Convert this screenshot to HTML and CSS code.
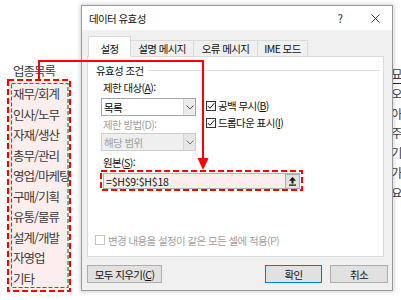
FILE: index.html
```html
<!DOCTYPE html>
<html lang="ko">
<head>
<meta charset="utf-8">
<title>데이터 유효성</title>
<link rel="stylesheet" href="styles.css">
</head>
<body>
<div class="sheet">
  <div class="col-left">
    <div class="col-head">업종목록</div>
    <ul class="list">
      <li>재무/회계</li>
      <li>인사/노무</li>
      <li>자재/생산</li>
      <li>총무/관리</li>
      <li>영업/마케팅</li>
      <li>구매/기획</li>
      <li>유통/물류</li>
      <li>설계/개발</li>
      <li>자영업</li>
      <li>기타</li>
    </ul>
  </div>
  <div class="col-right">
    <div class="frag head">묘</div>
    <div class="frag">오</div>
    <div class="frag">아</div>
    <div class="frag">주</div>
    <div class="frag">기</div>
    <div class="frag">가</div>
    <div class="frag">요</div>
  </div>
</div>

<div class="dialog">
  <div class="titlebar">
    <span class="title">데이터 유효성</span>
    <span class="help">?</span>
    <span class="close"><svg width="10" height="10" viewBox="0 0 10 10"><path d="M0.5 0.5 L9.5 9.5 M9.5 0.5 L0.5 9.5" stroke="#222" stroke-width="1" fill="none"/></svg></span>
  </div>
  <div class="dlg-body">
    <div class="tabs">
      <div class="tab active t1">설정</div>
      <div class="tab t2">설명 메시지</div>
      <div class="tab t3">오류 메시지</div>
      <div class="tab t4">IME 모드</div>
    </div>
    <div class="panel">
      <div class="group-head"><span>유효성 조건</span><span class="rule"></span></div>
      <div class="conds">
        <div class="cond-left">
          <div class="lbl">제한 대상(<u>A</u>):</div>
          <div class="combo"><span class="combo-val">목록</span><span class="drop"><svg width="8" height="5" viewBox="0 0 8 5"><path d="M0.5 0.5 L4 4 L7.5 0.5" stroke="#555" fill="none" stroke-width="1"/></svg></span></div>
          <div class="lbl dis lbl2">제한 방법(D):</div>
          <div class="combo disabled"><span class="combo-val">해당 범위</span><span class="drop"><svg width="8" height="5" viewBox="0 0 8 5"><path d="M0.5 0.5 L4 4 L7.5 0.5" stroke="#777" fill="none" stroke-width="1"/></svg></span></div>
        </div>
        <div class="cond-right">
          <div class="chk"><span class="box"><svg width="8" height="8" viewBox="0 0 8 8"><path d="M0.8 4 L3 6.3 L7.3 1.2" stroke="#111" fill="none" stroke-width="1"/></svg></span>공백 무시(<u>B</u>)</div>
          <div class="chk"><span class="box"><svg width="8" height="8" viewBox="0 0 8 8"><path d="M0.8 4 L3 6.3 L7.3 1.2" stroke="#111" fill="none" stroke-width="1"/></svg></span>드롭다운 표시(<u>I</u>)</div>
        </div>
      </div>
      <div class="lbl src-lbl">원본(<u>S</u>):</div>
      <div class="src">
        <span class="src-val">=$H$9:$H$18</span>
        <span class="src-btn"><svg width="9" height="9" viewBox="0 0 9 9"><path d="M4.5 0 L8 3.8 L1 3.8 Z" fill="#111"/><rect x="3.5" y="3.5" width="2" height="3" fill="#111"/><rect x="1" y="7.5" width="7" height="1.2" fill="#111"/></svg></span>
      </div>
      <div class="chk dis apply"><span class="box"></span>변경 내용을 설정이 같은 모든 셀에 적용(P)</div>
    </div>
    <div class="footer">
      <button class="btn clear">모두 지우기(<u>C</u>)</button>
      <span class="spacer"></span>
      <button class="btn ok">확인</button>
      <button class="btn cancel">취소</button>
    </div>
  </div>
</div>

<svg class="overlay" width="401" height="300" viewBox="0 0 401 300">
  <rect x="8" y="80" width="62" height="211" fill="none" stroke="#ff0000" stroke-width="2" stroke-dasharray="6 3"/>
  <rect x="11.5" y="83.5" width="56.5" height="204" fill="none" stroke="#2f7a3a" stroke-width="1.2" stroke-dasharray="4 2"/>
  <rect x="101" y="171" width="201" height="19" fill="none" stroke="#ff0000" stroke-width="2" stroke-dasharray="6 3"/>
  <path d="M39 80 V61 H203 V160" fill="none" stroke="#ff0000" stroke-width="2"/>
  <polygon points="197.5,158 208.5,158 203,170" fill="#ff0000"/>
</svg>
</body>
</html>
```
FILE: styles.css
```css
html, body {
  margin: 0;
  padding: 0;
  width: 401px;
  height: 300px;
  overflow: hidden;
  background: #ffffff;
}
body {
  position: relative;
  font-family: "Noto Sans CJK KR", "Noto Sans", sans-serif;
  color: #000;
}

/* spreadsheet behind */
.sheet {
  display: flex;
  height: 300px;
}
.col-left {
  margin-left: 8px;
  padding-top: 63px;
  width: 62px;
}
.col-head {
  height: 16px;
  line-height: 16px;
  padding-left: 5px;
  font-size: 12.5px;
  letter-spacing: -1px;
  color: #3a3a3a;
  white-space: nowrap;
}
.list {
  list-style: none;
  margin: 1px 0 0;
  padding: 4px 0 0 5px;
  box-sizing: border-box;
  height: 211px;
  background: #fdeeee;
}
.list li {
  height: 20.5px;
  line-height: 20.5px;
  font-size: 12.5px;
  letter-spacing: -1px;
  color: #3a3a3a;
  white-space: nowrap;
}
.col-right {
  margin-left: auto;
  width: 10px;
  padding-top: 64px;
  overflow: hidden;
}
.frag {
  height: 19.8px;
  line-height: 19.8px;
  font-size: 12.5px;
  color: #404040;
  white-space: nowrap;
}
.frag.head {
  border-bottom: 1px solid #222;
  height: 18.8px;
}

/* dialog */
.dialog {
  position: absolute;
  left: 81px;
  top: 5px;
  width: 312px;
  height: 286px;
  box-sizing: border-box;
  border: 1px solid #9a9a9a;
  background: #f0f0f0;
  box-shadow: 0 0 4px 1px rgba(0, 0, 0, 0.18);
  display: flex;
  flex-direction: column;
  font-size: 10.5px;
  letter-spacing: -0.6px;
  z-index: 5;
}
.titlebar {
  height: 24px;
  flex: none;
  background: #fff;
  display: flex;
  align-items: center;
  padding-left: 7px;
}
.title {
  flex: 1;
  font-size: 10.5px;
  color: #111;
}
.help {
  width: 16px;
  text-align: center;
  font-size: 11px;
  margin-right: 10px;
  color: #222;
}
.close {
  width: 34px;
  display: flex;
  justify-content: center;
  align-items: center;
}
.close svg { width: 9px; height: 9px; }

.dlg-body {
  flex: 1;
  display: flex;
  flex-direction: column;
  padding: 6px 4px 0 5px;
}
.tabs {
  display: flex;
  align-items: flex-end;
  height: 20px;
  padding-left: 1px;
  position: relative;
  z-index: 2;
}
.tab {
  height: 16px;
  box-sizing: border-box;
  border: 1px solid #d9d9d9;
  border-bottom: none;
  margin-right: -1px;
  background: #f0f0f0;
  display: flex;
  align-items: center;
  justify-content: center;
  color: #111;
  white-space: nowrap;
}
.tab.active {
  height: 21px;
  margin-bottom: -1px;
  background: #fff;
  padding-top: 2px;
}
.t1 { width: 43px; }
.t2 { width: 64px; }
.t3 { width: 65px; }
.t4 { width: 51px; }

.panel {
  height: 201px;
  box-sizing: border-box;
  margin-right: 4px;
  background: #fff;
  border: 1px solid #d9d9d9;
  padding: 6px 3px 0 8px;
  display: flex;
  flex-direction: column;
  align-items: flex-start;
}
.group-head {
  align-self: stretch;
  height: 14px;
  display: flex;
  align-items: center;
  gap: 4px;
  color: #111;
}
.rule {
  flex: 1;
  border-top: 1px solid #dcdcdc;
}
.conds {
  display: flex;
  margin: 4px 0 0 5px;
}
.cond-left {
  width: 95px;
  display: flex;
  flex-direction: column;
}
.lbl {
  height: 14px;
  line-height: 14px;
  padding-left: 2px;
  color: #111;
  white-space: nowrap;
}
.lbl.dis { color: #a0a0a0; }
.lbl2 { margin-top: 2px; }
.combo {
  height: 18px;
  margin-top: 3px;
  box-sizing: border-box;
  border: 1px solid #a6a6a6;
  background: #fff;
  display: flex;
  align-items: center;
}
.combo.disabled {
  margin-top: 1px;
  background: #efefef;
  border-color: #cccccc;
  color: #a0a0a0;
}
.combo-val {
  flex: 1;
  padding-left: 2px;
}
.drop {
  width: 11px;
  align-self: stretch;
  border-left: 1px solid #d4d4d4;
  background: #ececec;
  display: flex;
  align-items: center;
  justify-content: center;
}
.combo.disabled .drop { background: #e6e6e6; }
.cond-right {
  margin-left: 10px;
  padding-top: 16px;
  display: flex;
  flex-direction: column;
}
.chk {
  height: 17px;
  display: flex;
  align-items: center;
  color: #111;
  white-space: nowrap;
}
.box {
  width: 10px;
  height: 10px;
  box-sizing: border-box;
  border: 1px solid #333;
  background: #fff;
  margin-right: 2px;
  display: flex;
  align-items: center;
  justify-content: center;
}
.src-lbl {
  margin: 5px 0 0 5px;
}
.src {
  margin: 3px 0 0 7px;
  width: 197px;
  height: 16px;
  box-sizing: border-box;
  border: 1px solid #b4b4b4;
  background: #fdeeee;
  display: flex;
  align-items: center;
}
.src-val {
  flex: 1;
  padding-left: 2px;
  letter-spacing: -0.2px;
  color: #111;
}
.src-btn {
  width: 15px;
  height: 15px;
  box-sizing: border-box;
  margin-right: -1px;
  border: 1px solid #adadad;
  background: #e1e1e1;
  display: flex;
  align-items: center;
  justify-content: center;
}
.apply {
  margin: 44px 0 0 -1px;
  height: 14px;
  color: #a0a0a0;
}
.apply .box {
  border-color: #c4c4c4;
  margin-right: 3px;
}

.footer {
  margin-top: 8px;
  height: 18px;
  display: flex;
  gap: 8px;
}
.btn {
  height: 18px;
  box-sizing: border-box;
  padding: 0;
  margin: 0;
  border: 1px solid #adadad;
  background: #e1e1e1;
  font: inherit;
  letter-spacing: inherit;
  color: #111;
}
.clear { width: 75px; }
.spacer { flex: 1; }
.ok {
  width: 57px;
  border-color: #0078d7;
}
.cancel { width: 58px; }

.overlay {
  position: absolute;
  left: 0;
  top: 0;
  pointer-events: none;
  z-index: 10;
}
```
